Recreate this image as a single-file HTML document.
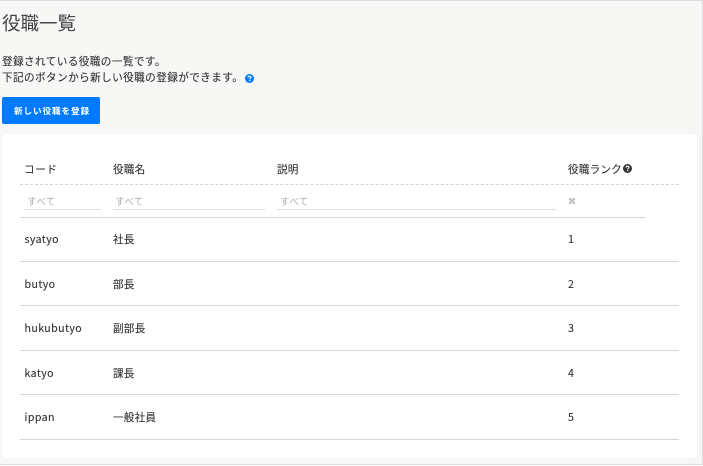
<!DOCTYPE html>
<html lang="ja"><head><meta charset="utf-8"><style>
html,body{margin:0;padding:0;width:703px;height:466px;overflow:hidden;background:#fff}
body{position:relative;font-family:"Liberation Sans","Noto Sans CJK JP",sans-serif;color:#333}
.a{position:absolute;white-space:nowrap;font-family:"Noto Sans CJK JP","Liberation Sans",sans-serif;line-height:16px;font-size:10.6px;letter-spacing:.42px;color:#333;-webkit-text-stroke:.12px #333}
.t{letter-spacing:.2px}
.l{position:absolute;background:#d6d6d6;height:1px}
.a.ph{color:#aaa;font-size:9.6px;letter-spacing:.3px;-webkit-text-stroke:0}
</style></head><body>
<div style="position:absolute;left:0;top:0;width:702px;height:463px;background:#f7f7f5;border-top:1px solid #dcdcdc;border-right:1px solid #dcdcdc;border-bottom:1px solid #dcdcdc"></div>
<div class="a" style="left:2px;top:11px;font-size:18.5px;line-height:24px;letter-spacing:0;color:#444;-webkit-text-stroke:0">役職一覧</div>
<div class="a" style="left:2px;top:54px">登録されている役職の一覧です。</div>
<div class="a" style="left:2px;top:70px">下記のボタンから新しい役職の登録ができます。</div>
<svg style="position:absolute;left:245px;top:74px" width="9" height="9" viewBox="0 0 9 9"><circle cx="4.5" cy="4.5" r="4.5" fill="#007bff"/><path d="M3 3.5C3 2.6 3.7 2.2 4.5 2.2S6 2.7 6 3.4C6 4.4 4.6 4.4 4.6 5.4" fill="none" stroke="#fff" stroke-width="1.1"/><rect x="4" y="6" width="1.2" height="1.1" fill="#fff"/></svg>
<div style="position:absolute;left:2px;top:97px;width:98px;height:27px;background:#007bff;border-radius:2px"></div>
<div class="a" style="left:14px;top:103px;font-size:8.6px;color:#fff;font-weight:700;letter-spacing:.9px;-webkit-text-stroke:0">新しい役職を登録</div>
<div style="position:absolute;left:2px;top:134px;width:695px;height:324px;background:#fff;border-radius:4px"></div>
<div class="a t" style="left:24px;top:162px;letter-spacing:.6px">コード</div>
<div class="a t" style="left:113px;top:162px">役職名</div>
<div class="a t" style="left:277px;top:162px">説明</div>
<div class="a t" style="left:568px;top:162px">役職ランク</div>
<svg style="position:absolute;left:623px;top:164px" width="9" height="9" viewBox="0 0 9 9"><circle cx="4.5" cy="4.5" r="4.5" fill="#333"/><path d="M3 3.5C3 2.6 3.7 2.2 4.5 2.2S6 2.7 6 3.4C6 4.4 4.6 4.4 4.6 5.4" fill="none" stroke="#fff" stroke-width="1.1"/><rect x="4" y="6" width="1.2" height="1.1" fill="#fff"/></svg>
<div style="position:absolute;left:20px;top:184px;width:659px;border-top:1px dashed #d4d4d4"></div>
<div class="a ph" style="left:27px;top:193px">すべて</div>
<div class="a ph" style="left:115px;top:193px">すべて</div>
<div class="a ph" style="left:280px;top:193px">すべて</div>
<div class="l" style="left:24px;top:209px;width:77px;background:#dfdfdf"></div>
<div class="l" style="left:113px;top:209px;width:152px;background:#dfdfdf"></div>
<div class="l" style="left:277px;top:209px;width:279px;background:#dfdfdf"></div>
<svg style="position:absolute;left:568px;top:197px" width="8" height="8" viewBox="0 0 8 8"><path d="M1.2 1.2L6.8 6.8M6.8 1.2L1.2 6.8" stroke="#c4c4c4" stroke-width="2.2"/></svg>
<div class="l" style="left:20px;top:217px;width:625px"></div>
<div class="a" style="left:24.5px;top:232px">syatyo</div><div class="a t" style="left:113px;top:232px">社長</div><div class="a" style="left:568px;top:232px">1</div>
<div class="l" style="left:20px;top:261px;width:659px"></div>
<div class="a" style="left:24.5px;top:277px">butyo</div><div class="a t" style="left:113px;top:277px">部長</div><div class="a" style="left:568px;top:277px">2</div>
<div class="l" style="left:20px;top:305px;width:659px"></div>
<div class="a" style="left:24.5px;top:321px">hukubutyo</div><div class="a t" style="left:113px;top:321px">副部長</div><div class="a" style="left:568px;top:321px">3</div>
<div class="l" style="left:20px;top:350px;width:659px"></div>
<div class="a" style="left:24.5px;top:366px">katyo</div><div class="a t" style="left:113px;top:366px">課長</div><div class="a" style="left:568px;top:366px">4</div>
<div class="l" style="left:20px;top:394px;width:659px"></div>
<div class="a" style="left:24.5px;top:410px">ippan</div><div class="a t" style="left:113px;top:410px">一般社員</div><div class="a" style="left:568px;top:410px">5</div>
<div class="l" style="left:20px;top:439px;width:659px"></div>
</body></html>
